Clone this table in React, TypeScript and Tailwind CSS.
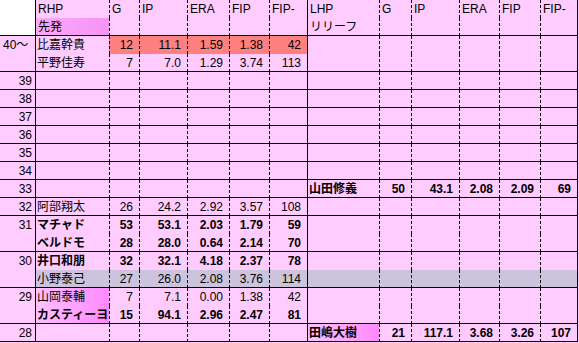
import clsx from "clsx";

type Row = {
    label?: string;
    name?: string;
    stats?: string[];
    lname?: string;
    lstats?: string[];
    bold?: boolean;
    lbold?: boolean;
    line?: boolean;
    salmon?: boolean;
    gray?: boolean;
    grad?: boolean;
    lgrad?: boolean;
};

const rows: Row[] = [
    { label: "40～", name: "比嘉幹貴", stats: ["12", "11.1", "1.59", "1.38", "42"], salmon: true },
    { name: "平野佳寿", stats: ["7", "7.0", "1.29", "3.74", "113"], line: true },
    { label: "39", line: true },
    { label: "38", line: true },
    { label: "37", line: true },
    { label: "36", line: true },
    { label: "35", line: true },
    { label: "34", line: true },
    { label: "33", lname: "山田修義", lstats: ["50", "43.1", "2.08", "2.09", "69"], lbold: true, line: true },
    { label: "32", name: "阿部翔太", stats: ["26", "24.2", "2.92", "3.57", "108"], line: true },
    { label: "31", name: "マチャド", stats: ["53", "53.1", "2.03", "1.79", "59"], bold: true },
    { name: "ベルドモ", stats: ["28", "28.0", "0.64", "2.14", "70"], bold: true, line: true },
    { label: "30", name: "井口和朋", stats: ["32", "32.1", "4.18", "2.37", "78"], bold: true },
    { name: "小野泰己", stats: ["27", "26.0", "2.08", "3.76", "114"], gray: true, line: true },
    { label: "29", name: "山岡泰輔", stats: ["7", "7.1", "0.00", "1.38", "42"], grad: true },
    { name: "カスティーヨ", stats: ["15", "94.1", "2.96", "2.47", "81"], bold: true, grad: true, line: true },
    { label: "28", lname: "田嶋大樹", lstats: ["21", "117.1", "3.68", "3.26", "107"], lbold: true, lgrad: true, line: true },
];

const heads = ["G", "IP", "ERA", "FIP", "FIP-"];

const dash = "border-l border-black [border-left-style:dashed]";
const solid = "border-l border-black";

export default function App() {
    return (
        <div className="w-[579px] h-[343px] bg-[#ffccff] overflow-hidden font-['Liberation_Sans','Noto_Sans_CJK_JP',sans-serif] text-[12px] text-black">
            <div className="grid grid-cols-[36px_73px_30px_48px_42px_40px_38px_72px_32px_48px_40px_41px_38px] auto-rows-[18px]">
                {/* header */}
                <div className="row-span-2 bg-white border-r border-b border-black" />
                <div className="flex items-center pl-[2px]">RHP</div>
                {heads.map((h) => (
                    <div key={"r" + h} className={clsx("flex items-center pl-[2px]", dash)}>{h}</div>
                ))}
                <div className={clsx("flex items-center pl-[2px]", solid)}>LHP</div>
                {heads.map((h, i) => (
                    <div key={"l" + h} className={clsx("flex items-center pl-[2px]", dash, i === 4 && "border-r border-r-black")}>{h}</div>
                ))}
                <div className="flex items-center pl-[2px] border-b border-black bg-gradient-to-r from-[#fbaafb] to-[#f793f7]">先発</div>
                {heads.map((h) => (
                    <div key={"r2" + h} className={clsx("border-b", dash)} />
                ))}
                <div className={clsx("flex items-center pl-[2px] border-b", solid)}>リリーフ</div>
                {heads.map((h, i) => (
                    <div key={"l2" + h} className={clsx("border-b", dash, i === 4 && "border-r")} />
                ))}

                {rows.map((r, ri) => {
                    const b = r.line && "border-b border-black";
                    const bg = r.gray && "bg-[#ccc3dc]";
                    return [
                        <div key={ri + "lab"} className={clsx("flex items-center border-r border-black", b, r.label === "40～" ? "pl-[3px]" : "justify-end pr-[3px]")}>
                            {r.label}
                        </div>,
                        <div
                            key={ri + "n"}
                            className={clsx(
                                "flex items-center pl-[1px] whitespace-nowrap",
                                b,
                                bg,
                                r.bold && "font-bold",
                                r.grad && "bg-gradient-to-r from-[#ffc0ff] to-[#ff88ff]"
                            )}
                        >
                            {r.name}
                        </div>,
                        ...heads.map((h, i) => (
                            <div
                                key={ri + "s" + h}
                                className={clsx(
                                    "flex items-center justify-end pr-[6px]",
                                    dash,
                                    b,
                                    bg,
                                    r.salmon && "bg-[#ff8080]",
                                    r.bold && "font-bold"
                                )}
                            >
                                {r.stats?.[i]}
                            </div>
                        )),
                        <div
                            key={ri + "ln"}
                            className={clsx(
                                "flex items-center pl-[1px] whitespace-nowrap",
                                solid,
                                b,
                                bg,
                                r.lbold && "font-bold",
                                r.lgrad && "bg-gradient-to-r from-[#ffc0ff] to-[#ff88ff]"
                            )}
                        >
                            {r.lname}
                        </div>,
                        ...heads.map((h, i) => (
                            <div
                                key={ri + "ls" + h}
                                className={clsx(
                                    "flex items-center justify-end pr-[6px]",
                                    dash,
                                    b,
                                    bg,
                                    r.lbold && "font-bold",
                                    i === 4 && "border-r"
                                )}
                            >
                                {r.lstats?.[i]}
                            </div>
                        )),
                    ];
                })}
            </div>
        </div>
    );
}
